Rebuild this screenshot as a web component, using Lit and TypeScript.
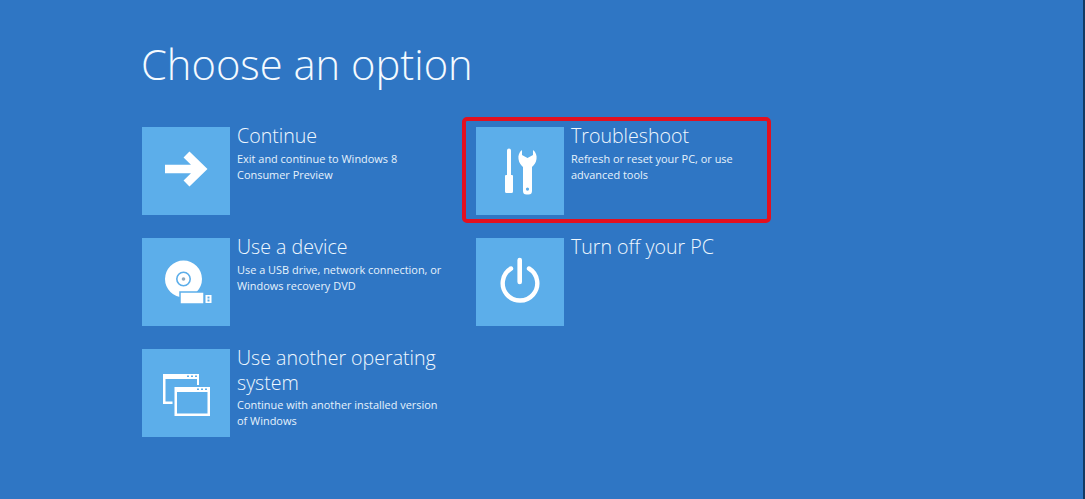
import { LitElement, html, css, svg } from "lit";
import { customElement } from "lit/decorators.js";

const arrow = svg`<path d="M23 42H60M44.500 27.500L59.400 42L44.500 56.500" fill="none" stroke="#fff" stroke-width="8.500" stroke-linejoin="miter"/>`;
const device = svg`
  <path fill-rule="evenodd" d="M41.500 22.500a18.500 18.500 0 1 0 0 37 18.500 18.500 0 0 0 0-37Zm0 11a7.500 7.500 0 1 1 0 15 7.500 7.500 0 0 1 0-15Zm0 1.600a5.900 5.900 0 1 0 0 11.800 5.900 5.900 0 0 0 0-11.800Z" fill="#fff"/>
  <circle cx="41.500" cy="41" r="1.800" fill="#8fa9bd"/>
  <rect x="38" y="54" width="24" height="12" fill="#fff" stroke="#5caeea" stroke-width="1.500"/>
  <path fill-rule="evenodd" d="M63.500 57H69.500V65H63.500ZM65.500 58.500V60.500H67.500V58.500ZM65.500 61.500V63.500H67.500V61.500Z" fill="#fff"/>`;
const windows = svg`
  <path fill-rule="evenodd" d="M21 25H57V36H55V30H23.500V52.500H30.500V55H21ZM45 26.500V28H47V26.500ZM49 26.500V28H51V26.500ZM53 26.500V28H55V26.500Z" fill="#fff"/>
  <path fill-rule="evenodd" d="M32.500 38H68V67H32.500ZM35 43V64.500H65.500V43ZM55 39.500V41H57V39.500ZM59 39.500V41H61V39.500ZM63 39.500V41H65V39.500Z" fill="#fff"/>`;
const tools = svg`
  <path d="M31 23.500a2 2 0 0 1 4 0V48H36A1 1 0 0 1 37 49V64.500A1.500 1.500 0 0 1 35.500 66H30.500A1.500 1.500 0 0 1 29 64.500V49A1 1 0 0 1 30 48H31Z" fill="#fff"/>
  <path fill-rule="evenodd" d="M46 23V28L51.500 31L57 28V23C60 25 61 29 60.500 32C60 36 58 38 56 40V64A3.500 3.500 0 0 1 52.500 67.500H50.500A3.500 3.500 0 0 1 47 64V40C45 38 43 36 42.500 32C42 29 43 25 46 23ZM51.500 60.500a1.600 1.600 0 1 0 0 3.200 1.600 1.600 0 0 0 0-3.200Z" fill="#fff"/>`;
const power = svg`
  <path d="M43.700 22V44" fill="none" stroke="#fff" stroke-width="4.600" stroke-linecap="round"/>
  <path d="M35 30.500A17.300 17.300 0 1 0 53 30.500" fill="none" stroke="#fff" stroke-width="4.400" stroke-linecap="round"/>`;

interface Option { title: string; desc?: string; icon: unknown; marked?: boolean; }

const columns: Option[][] = [
  [
    { title: "Continue", desc: "Exit and continue to Windows 8 Consumer Preview", icon: arrow },
    { title: "Use a device", desc: "Use a USB drive, network connection, or Windows recovery DVD", icon: device },
    { title: "Use another operating system", desc: "Continue with another installed version of Windows", icon: windows },
  ],
  [
    { title: "Troubleshoot", desc: "Refresh or reset your PC, or use advanced tools", icon: tools, marked: true },
    { title: "Turn off your PC", icon: power },
  ],
];

@customElement("app-root")
export class AppRoot extends LitElement {
  static styles = css`
    :host {
      display: block;
      width: 1085px;
      height: 499px;
      overflow: hidden;
      box-sizing: border-box;
      background: #2f76c4;
      color: #fff;
      font-family: "Open Sans", "Noto Sans", sans-serif;
      border-right: 2px solid #123a63;
    }
    .page {
      padding: 33px 0 0 141px;
    }
    h1 {
      margin: 0 0 32px;
      font-size: 41.700px;
      line-height: 62px;
      font-weight: 300;
      color: #f4faff;
    }
    .columns {
      display: flex;
      padding-left: 1px;
    }
    .col {
      width: 334px;
      display: flex;
      flex-direction: column;
      gap: 23px;
    }
    .option {
      position: relative;
      display: flex;
      gap: 7px;
      height: 88px;
      width: 280px;
    }
    .marked::after {
      content: "";
      position: absolute;
      left: -14px;
      top: -10px;
      width: 309px;
      height: 106px;
      box-sizing: border-box;
      border: 4px solid #e3101f;
      border-radius: 5px;
    }
    .tile {
      flex: none;
      width: 88px;
      height: 88px;
      background: #5caeea;
    }
    .tile svg {
      display: block;
      width: 88px;
      height: 88px;
    }
    .text {
      width: 206px;
      flex: none;
    }
    .title {
      font-size: 19.600px;
      line-height: 24.500px;
      font-weight: 300;
      color: #f0f8ff;
      margin-top: -3px;
    }
    .desc {
      font-size: 10.950px;
      line-height: 16px;
      margin-top: 2px;
      color: #e6f2fc;
    }
  `;

  render() {
    return html`<div class="page">
      <h1>Choose an option</h1>
      <div class="columns">
        ${columns.map(
          (col) => html`<div class="col">
            ${col.map(
              (o) => html`<div class="option ${o.marked ? "marked" : ""}">
                <div class="tile"><svg viewBox="0 0 88 88">${o.icon}</svg></div>
                <div class="text">
                  <div class="title">${o.title}</div>
                  ${o.desc ? html`<div class="desc">${o.desc}</div>` : ""}
                </div>
              </div>`
            )}
          </div>`
        )}
      </div>
    </div>`;
  }
}
